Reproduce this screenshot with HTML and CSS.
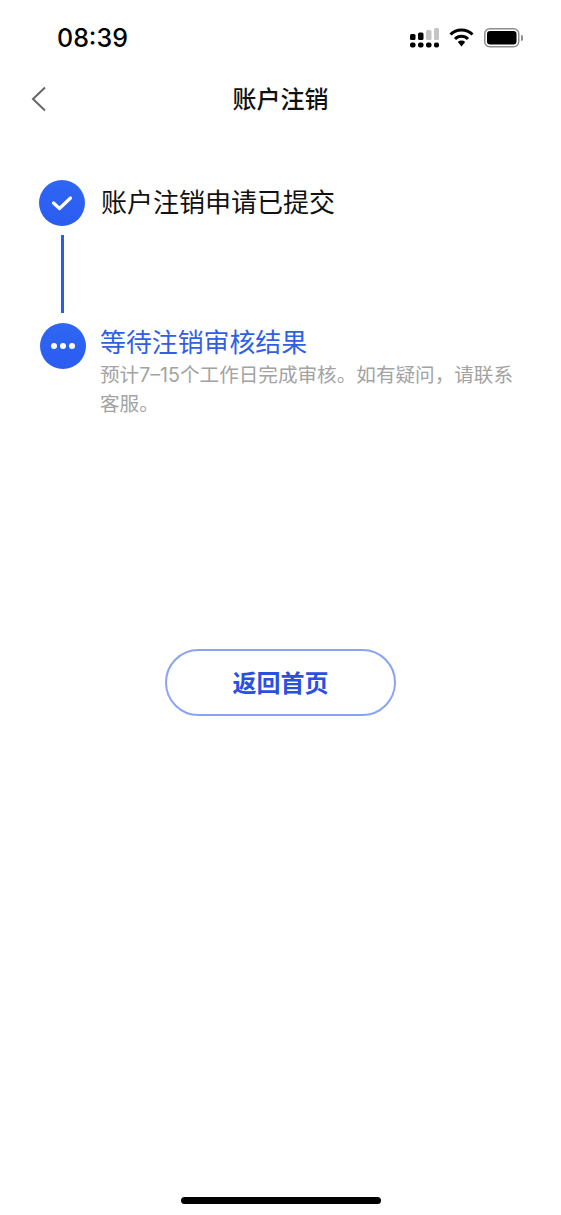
FILE: index.html
```html
<!DOCTYPE html>
<html lang="zh-CN">
<head>
    <meta charset="UTF-8">
    <meta name="viewport" content="width=device-width, initial-scale=1.0">
    <title>账户注销</title>
    <link rel="stylesheet" href="styles.css">
</head>
<body>
    <div class="screen">
        <div class="status-bar">
            <span class="status-time">08:39</span>
            <div class="status-icons">
                <svg class="icon-signal" width="29" height="20" viewBox="0 0 29 20">
                    <rect x="0" y="6" width="5.500" height="6" rx="1.500" fill="#000"/>
                    <rect x="8" y="4.500" width="5.500" height="7.500" rx="1.500" fill="#000"/>
                    <rect x="16" y="2" width="5.500" height="10" rx="1.500" fill="#c4c4c4"/>
                    <rect x="24" y="0" width="5" height="12" rx="1.500" fill="#c4c4c4"/>
                    <rect x="0" y="14.500" width="5.500" height="5" rx="2" fill="#000"/>
                    <rect x="8" y="14.500" width="5.500" height="5" rx="2" fill="#000"/>
                    <rect x="16" y="14.500" width="5.500" height="5" rx="2" fill="#000"/>
                    <rect x="24" y="14.500" width="5" height="5" rx="2" fill="#000"/>
                </svg>
                <svg class="icon-wifi" width="25" height="19" viewBox="0 0 25 19">
                    <path d="M1.500 6.500 A15.500 15.500 0 0 1 23.500 6.500" fill="none" stroke="#000" stroke-width="3"/>
                    <path d="M6 11 A9 9 0 0 1 19 11" fill="none" stroke="#000" stroke-width="3"/>
                    <path d="M8.800 14 L12.500 18.500 L16.200 14 A5.500 5.500 0 0 0 8.800 14 Z" fill="#000"/>
                </svg>
                <svg class="icon-battery" width="39" height="20" viewBox="0 0 39 20">
                    <rect x="0.750" y="0.750" width="34" height="18" rx="5" fill="none" stroke="#8e8e8e" stroke-width="1.500"/>
                    <rect x="3" y="3" width="29.500" height="13.500" rx="3" fill="#000"/>
                    <path d="M37 7 a2.500 3 0 0 1 0 6 Z" fill="#8e8e8e"/>
                </svg>
            </div>
        </div>

        <div class="nav-bar">
            <svg class="nav-back" width="16" height="26" viewBox="0 0 16 26">
                <path d="M14 1.500 L2 13 L14 24.500" fill="none" stroke="#666" stroke-width="2"/>
            </svg>
            <h1 class="nav-title">账户注销</h1>
        </div>

        <div class="steps">
            <div class="step step-done">
                <div class="step-track">
                    <div class="step-dot">
                        <svg width="24" height="18" viewBox="0 0 24 18">
                            <path d="M3.500 9 L9.500 14.500 L20.500 4" fill="none" stroke="#fff" stroke-width="3.200" stroke-linecap="round" stroke-linejoin="round"/>
                        </svg>
                    </div>
                    <div class="step-line"></div>
                </div>
                <div class="step-title">账户注销申请已提交</div>
            </div>
            <div class="step step-waiting">
                <div class="step-track">
                    <div class="step-dot">
                        <span class="dot"></span><span class="dot"></span><span class="dot"></span>
                    </div>
                </div>
                <div class="step-body">
                    <div class="step-title">等待注销审核结果</div>
                    <p class="step-desc">预计7–15个工作日完成审核。如有疑问，请联系<br>客服。</p>
                </div>
            </div>
        </div>

        <div class="actions">
            <button class="back-home">返回首页</button>
        </div>

        <div class="home-bar"></div>
    </div>
</body>
</html>
```

FILE: styles.css
```css
* {
    margin: 0;
    padding: 0;
    box-sizing: border-box;
}

body {
    font-family: "Inter", "Noto Sans CJK SC", sans-serif;
    background: #fff;
}

.screen {
    width: 561px;
    height: 1215px;
    display: flex;
    flex-direction: column;
    overflow: hidden;
    background: #fff;
}

.status-bar {
    height: 64px;
    padding: 11px 38px 0 57px;
    display: flex;
    justify-content: space-between;
    align-items: center;
    flex-shrink: 0;
}

.status-time {
    font-size: 25px;
    font-weight: 500;
    color: #000;
}

.status-icons {
    display: flex;
    align-items: center;
    gap: 10px;
}

.nav-bar {
    height: 70px;
    position: relative;
    display: flex;
    align-items: center;
    justify-content: center;
    flex-shrink: 0;
}

.nav-back {
    position: absolute;
    left: 31px;
    top: 22px;
}

.nav-title {
    font-size: 24px;
    font-weight: 500;
    color: #111;
    margin-bottom: 3px;
}

.steps {
    padding: 46px 40px 0 39px;
    flex-shrink: 0;
}

.step {
    display: flex;
}

.step-track {
    width: 46px;
    display: flex;
    flex-direction: column;
    align-items: center;
    flex-shrink: 0;
}

.step-dot {
    width: 46px;
    height: 46px;
    border-radius: 50%;
    background: linear-gradient(180deg, #2f66f3 0%, #2a5cf0 100%);
    display: flex;
    align-items: center;
    justify-content: center;
    gap: 3px;
}

.step-line {
    width: 3px;
    height: 78px;
    margin-top: 9px;
    background: #2b5bf0;
}

.step-title {
    font-size: 26px;
    line-height: 46px;
    color: #111;
}

.step-done {
    height: 143px;
}

.step-done .step-title {
    margin-left: 16px;
}

.step-waiting .step-track {
    margin-left: 1px;
}

.step-body {
    margin-left: 14px;
    flex: 1;
    margin-top: -3px;
}

.step-waiting .step-title {
    color: #2f60e4;
    font-size: 25.900px;
}

.step-desc {
    font-size: 19.600px;
    line-height: 29px;
    color: #a3a3a3;
    margin-top: -5px;
    white-space: nowrap;
}

.dot {
    width: 6px;
    height: 6px;
    border-radius: 50%;
    background: #fff;
}

.actions {
    display: flex;
    justify-content: center;
    margin-top: 230px;
    flex-shrink: 0;
}

.back-home {
    width: 231px;
    height: 67px;
    border-radius: 34px;
    border: 2px solid #8ba3f2;
    background: #fff;
    color: #2a50e0;
    font-family: inherit;
    font-size: 24px;
    font-weight: 600;
    padding-bottom: 3px;
}

.home-bar {
    width: 200px;
    height: 7px;
    border-radius: 4px;
    background: #000;
    margin: auto auto 11px;
}
```
